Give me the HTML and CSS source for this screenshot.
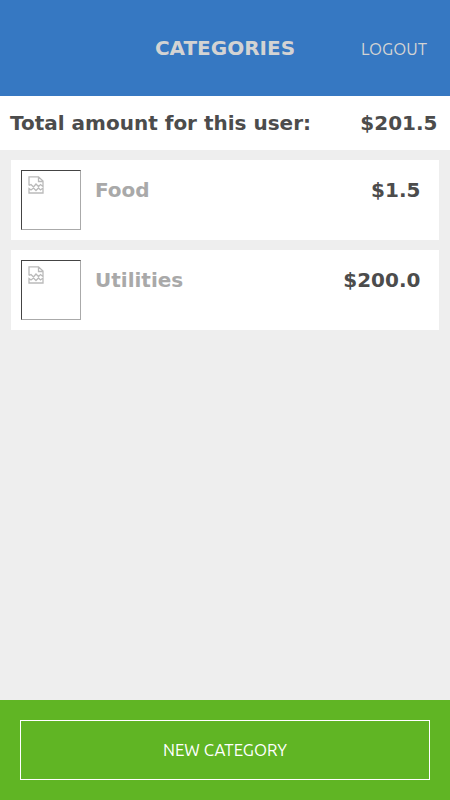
FILE: index.html
```html
<!DOCTYPE html>
<html lang="en">
<head>
<meta charset="utf-8">
<title>Categories</title>
<link rel="stylesheet" href="styles.css">
</head>
<body>
<header class="bar">
  <h1 class="title">CATEGORIES</h1>
  <a class="logout">LOGOUT</a>
</header>
<section class="total"><span>Total amount for this user:</span><span>$201.5</span></section>
<main class="list">
  <article class="card">
    <div class="thumb"><svg class="broken" viewBox="0 0 16 18"><path d="M1 9.500V.8h9.500L15 5v6M10.500 1v4.500H15M1 9.500l2-1 2.500 2.500 2.500-3 2.500 2.500 2-2 2.500 2M1 17v-4.500l2 1.500 2.500-2 2.500 2.500 2.500-2.500 2 2 2.500-2V17z"/></svg></div>
    <h2 class="name">Food</h2>
    <p class="amount">$1.5</p>
  </article>
  <article class="card">
    <div class="thumb"><svg class="broken" viewBox="0 0 16 18"><path d="M1 9.500V.8h9.500L15 5v6M10.500 1v4.500H15M1 9.500l2-1 2.500 2.500 2.500-3 2.500 2.500 2-2 2.500 2M1 17v-4.500l2 1.500 2.500-2 2.500 2.500 2.500-2.500 2 2 2.500-2V17z"/></svg></div>
    <h2 class="name">Utilities</h2>
    <p class="amount">$200.0</p>
  </article>
</main>
<footer class="footer"><a class="button">NEW CATEGORY</a></footer>
</body>
</html>
```
FILE: styles.css
```css
* { box-sizing: border-box; margin: 0; padding: 0; }
body { display: flex; flex-direction: column; height: 100vh; background: #eee; font: 20px "DejaVu Sans", sans-serif; color: #4c4c4c; }
.bar { display: grid; grid-template-columns: 1fr auto 1fr; align-items: center; height: 96px; padding: 0 23px; background: #3678c2; color: #d3d3d3; }
.title { grid-column: 2; font-size: 20px; }
.logout { justify-self: end; font: 16.8px Ubuntu, "Noto Sans", sans-serif; }
.total { display: flex; justify-content: space-between; align-items: center; height: 54px; padding: 0 12.5px 0 10px; background: #fff; font-weight: bold; }
.list { flex: 1; display: flex; flex-direction: column; gap: 10px; padding: 10px 11px; }
.card { display: flex; height: 80px; padding: 10px 18.6px 10px 10px; background: #fff; }
.thumb { width: 60px; height: 60px; padding: 5px 6px; border: 1px solid; border-color: #444 #aaa #aaa #444; }
.broken { display: block; width: 16px; height: 18px; fill: none; stroke: #bababa; stroke-width: 1.3; }
.name { margin-left: 14px; font-size: 20px; line-height: 40px; color: #a9a9a9; }
.amount { margin-left: auto; font-weight: bold; line-height: 40px; }
.footer { height: 100px; padding: 20px; background: #60b524; }
.button { display: flex; align-items: center; justify-content: center; height: 60px; padding-bottom: 2px; border: 1px solid #fff; color: #fff; font: 16.8px Ubuntu, "Noto Sans", sans-serif; }
```
